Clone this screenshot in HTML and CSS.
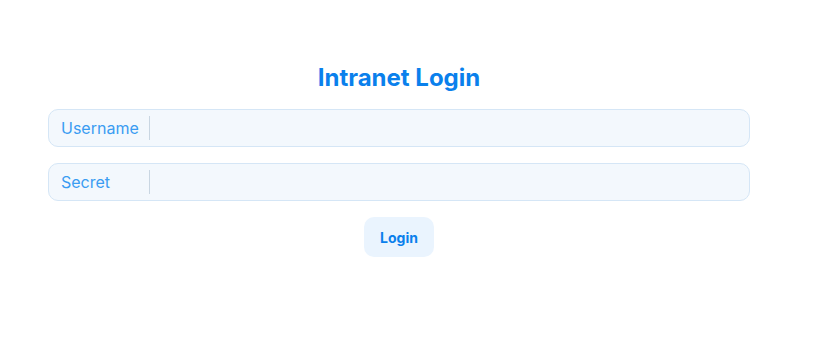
FILE: index.html
```html
<!DOCTYPE html>
<html lang="en">
<head>
    <meta charset="UTF-8">
    <meta name="viewport" content="width=device-width, initial-scale=1.0">
    <title>Intranet Login</title>
    <link rel="stylesheet" href="styles.css">
</head>
<body>
    <div class="container">
        <h1>Intranet Login</h1>
        <form class="login-form">
            <label class="field">
                <span class="field-label">Username</span>
                <input type="text" name="username">
            </label>
            <label class="field">
                <span class="field-label">Secret</span>
                <input type="password" name="secret">
            </label>
            <button type="button">Login</button>
        </form>
    </div>
</body>
</html>
```

FILE: styles.css
```css
body {
    font-family: Inter, "Noto Sans", sans-serif;
    margin: 0;
    background-color: #ffffff;
}
.container {
    width: 702px;
    margin-left: 48px;
    padding-top: 62px;
}
h1 {
    margin: 0 0 16px;
    text-align: center;
    font-size: 24px;
    line-height: 31px;
    font-weight: 700;
    color: #0a80ec;
}
.login-form {
    display: flex;
    flex-direction: column;
    align-items: center;
    gap: 16px;
}
.field {
    display: flex;
    align-items: center;
    width: 100%;
    height: 38px;
    box-sizing: border-box;
    padding: 0 12px;
    background-color: #f3f8fd;
    border: 1px solid #d5e6f6;
    border-radius: 10px;
}
.field-label {
    width: 88px;
    flex-shrink: 0;
    font-size: 16px;
    color: #3a9cf2;
    border-right: 1px solid #c9d6e2;
    line-height: 24px;
}
.field input {
    flex: 1;
    border: none;
    background: transparent;
    outline: none;
    font: inherit;
}
button {
    width: 70px;
    height: 40px;
    background-color: #eaf4fe;
    color: #0a80ec;
    border: none;
    border-radius: 10px;
    font-family: inherit;
    font-size: 14px;
    font-weight: 700;
    cursor: pointer;
}
```
